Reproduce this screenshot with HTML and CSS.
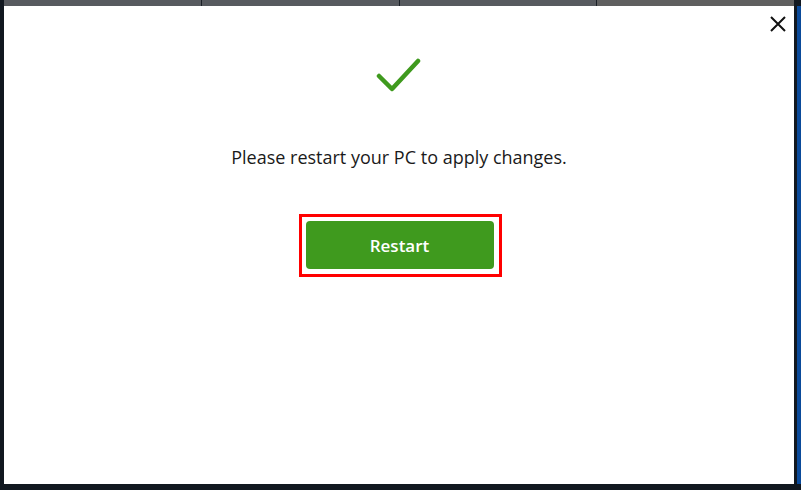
FILE: index.html
```html
<!doctype html>
<html lang="en">
<head>
    <meta charset="UTF-8">
    <title>Restart required</title>
    <link rel="stylesheet" href="styles.css">
</head>
<body>
<div class="topBar">
    <div class="tab"></div>
    <div class="tab"></div>
    <div class="tab"></div>
    <div class="tab last"></div>
</div>
<div class="frame">
    <div class="dialog">
        <button class="closeBtn" aria-label="Close">
            <svg width="18" height="18" viewBox="0 0 18 18">
                <path d="M2 2 L16 16 M16 2 L2 16" stroke="#111" stroke-width="2" fill="none"/>
            </svg>
        </button>
        <div class="checkIcon">
            <svg width="48" height="40" viewBox="0 0 48 40">
                <path d="M4 18 L17 31 L43 3" stroke="#3f9a1e" stroke-width="4.5" fill="none"
                      stroke-linecap="round" stroke-linejoin="round"/>
            </svg>
        </div>
        <p class="message">Please restart your PC to apply changes.</p>
        <div class="highlight">
            <button class="restartBtn">Restart</button>
        </div>
    </div>
    <div class="sideStrip"></div>
</div>
<div class="bottomBar"></div>
</body>
</html>
```

FILE: styles.css
```css
html, body {
    margin: 0;
    height: 100%;
}
body {
    background: #111820;
    font-family: "Open Sans", "Noto Sans", sans-serif;
    overflow: hidden;
}
.topBar {
    display: flex;
    height: 6px;
    margin-left: 4px;
    margin-right: 7px;
}
.tab {
    flex: 1;
    background: #575a5f;
    border-right: 1px solid #1a1f26;
}
.tab.last {
    background: #5f5f5f;
    border-right: none;
}
.frame {
    display: flex;
    height: 478px;
    padding-left: 4px;
}
.dialog {
    position: relative;
    width: 790px;
    background: #fff;
    display: flex;
    flex-direction: column;
    align-items: center;
    box-sizing: border-box;
}
.sideStrip {
    width: 4px;
    margin-left: 3px;
    background: #0a4a9a;
}
.closeBtn {
    position: absolute;
    top: 9px;
    right: 7px;
    border: none;
    background: none;
    padding: 0;
    width: 18px;
    height: 18px;
    cursor: pointer;
}
.checkIcon {
    margin-top: 52px;
    height: 40px;
}
.message {
    margin: 47px 0 0;
    font-size: 18px;
    color: #1a1a1a;
}
.highlight {
    margin-top: 45px;
    margin-left: 2px;
    border: 3px solid #ff0000;
    padding: 4px 5px 5px 4px;
}
.restartBtn {
    display: block;
    width: 188px;
    height: 48px;
    border: none;
    border-radius: 4px;
    background: #3f9a1e;
    color: #fff;
    font-family: "Open Sans", "Noto Sans", sans-serif;
    font-weight: 600;
    font-size: 17px;
    cursor: pointer;
}
.bottomBar {
    height: 6px;
}
```
